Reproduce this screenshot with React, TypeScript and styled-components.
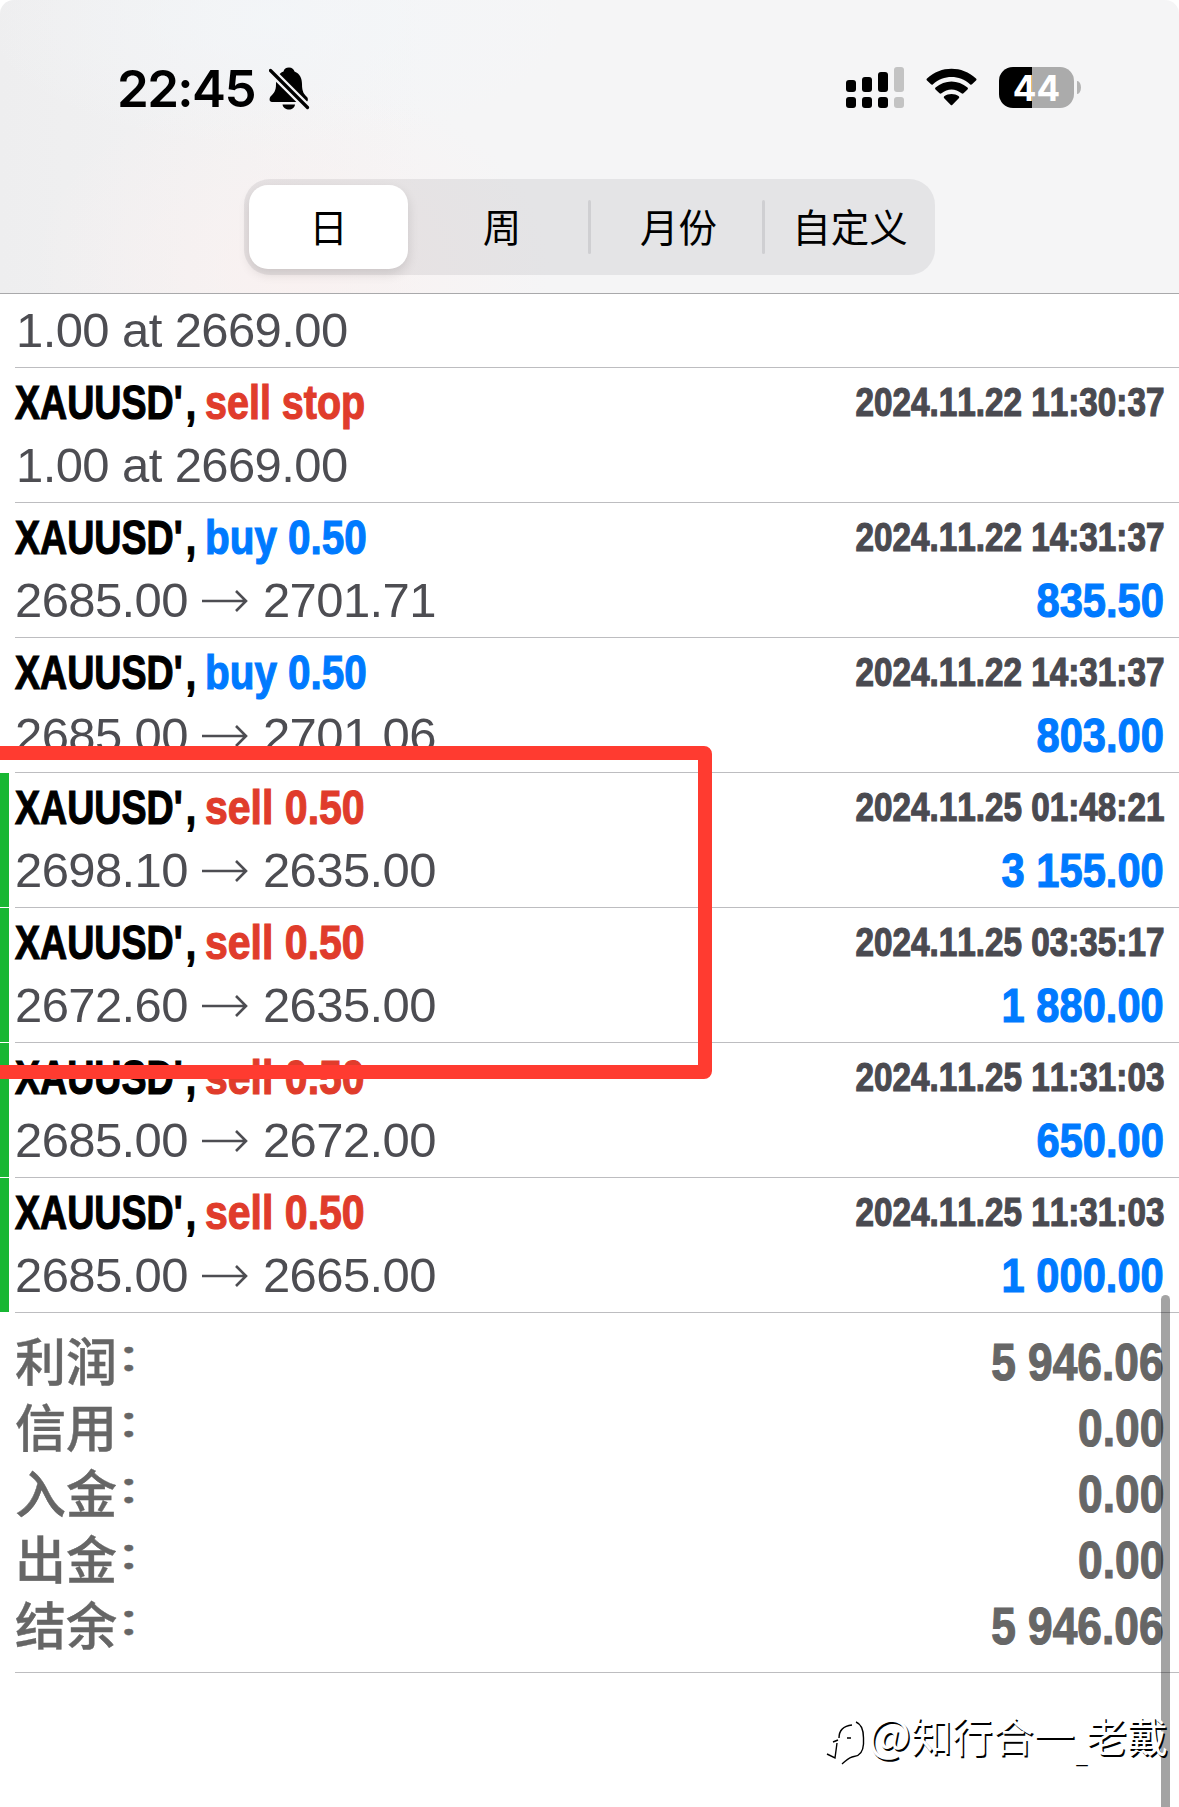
import React from "react";
import styled, { createGlobalStyle } from "styled-components";

const GlobalStyle = createGlobalStyle`
	* {
		box-sizing: border-box;
	}
	body {
		margin: 0;
		background: #fff;
		font-family: "Liberation Sans", "Noto Sans CJK SC", sans-serif;
		font-kerning: none;
	}
`;

const Screen = styled.main`
	position: relative;
	width: 1179px;
	height: 1807px;
	overflow: hidden;
	background: #fff;
`;

const Header = styled.header`
	height: 294px;
	border-bottom: 1px solid #a9a9ab;
	border-radius: 14px 14px 0 0;
	background:
		radial-gradient(ellipse 260px 190px at 290px 270px, rgba(251, 241, 240, 0.8), rgba(251, 241, 240, 0)),
		radial-gradient(ellipse 300px 130px at 280px 20px, rgba(243, 246, 249, 0.8), rgba(243, 246, 249, 0)),
		linear-gradient(90deg, #eeeeef 0, #f0f0f1 130px, #f5f5f6 420px);
`;

const StatusBar = styled.div`
	display: flex;
	justify-content: space-between;
	height: 179px;
	padding: 67px 97px 0 117px;
`;

const StatusGroup = styled.div`
	display: flex;
	height: 42px;
`;

const Clock = styled.time`
	width: 152px;
	font: 600 51px/43px Inter, sans-serif;
	letter-spacing: -1.6px;
	white-space: nowrap;
`;

const Signal = styled.svg`
	width: 58px;
	height: 41px;
	margin-right: 22px;
`;

const Wifi = styled.svg`
	width: 51px;
	height: 41px;
	margin-right: 22px;
`;

const Battery = styled.div`
	width: 75px;
	height: 41px;
	margin-right: 3px;
	border-radius: 14px;
	background: linear-gradient(90deg, #000 33px, #ababab 33px);
	color: #fff;
	font: 700 35px/42px Inter, sans-serif;
	text-align: center;
`;

const BatteryTip = styled.div`
	width: 4px;
	height: 13px;
	margin: 14px 1px 0 0;
	border-radius: 0 4px 4px 0 / 0 7px 7px 0;
	background: #b4b4b4;
`;

const Segments = styled.nav`
	display: flex;
	align-items: center;
	width: 691px;
	height: 96px;
	margin-left: 244px;
	padding: 0 5px;
	border-radius: 26px;
	background: rgba(118, 118, 122, 0.13);
`;

const Segment = styled.div<{ $active?: boolean; $width: number; $shift?: number }>`
	flex: none;
	width: ${({ $width }) => $width}px;
	height: 84px;
	padding-left: ${({ $shift = 0 }) => $shift}px;
	border-radius: 19px;
	background: ${({ $active }) => ($active ? "#fff" : "none")};
	box-shadow: ${({ $active }) => ($active ? "0 5px 12px rgba(0, 0, 0, 0.12)" : "none")};
	font: 400 38.500px/81px "Noto Sans CJK SC", sans-serif;
	text-align: center;
	white-space: nowrap;
`;

const SegmentDivider = styled.div`
	flex: none;
	width: 3px;
	height: 54px;
	border-radius: 2px;
	background: #cfcfd2;
`;

const Row = styled.article<{ $closed?: boolean; $partial?: boolean }>`
	display: flex;
	flex-direction: column;
	justify-content: flex-end;
	height: ${({ $partial }) => ($partial ? 74 : 135)}px;
	padding: 0 15px 6px 15px;
	background:
		linear-gradient(#bdbdc0, #bdbdc0) 15px 100% / 100% 1px no-repeat,
		linear-gradient(#18b733, #18b733) 0 0 / ${({ $closed }) => ($closed ? 9 : 0)}px calc(100% - 1px) no-repeat;
`;

const Line = styled.div`
	display: flex;
	justify-content: space-between;
	height: 63px;
	line-height: 63px;
	white-space: nowrap;
`;

const Condensed = styled.span<{ $squeeze: number; $end?: boolean }>`
	display: block;
	font-weight: 700;
	transform: scaleX(${({ $squeeze }) => $squeeze});
	transform-origin: ${({ $end }) => ($end ? "right" : "left")};
	-webkit-text-stroke: 1.2px currentColor;
`;

const Title = styled.div`
	display: flex;
	font-size: 49px;
`;

const SymbolName = styled.div`
	width: 190px;
	color: #000;
`;

const Apostrophe = styled.span`
	letter-spacing: 4px;
`;

const Side = styled.div<{ $side: string }>`
	color: ${({ $side }) => ($side === "buy" ? "#007aff" : "#e03c2b")};
`;

const Time = styled.div`
	color: #4a4a50;
	font-size: 40px;
`;

const Prices = styled.div<{ $pending?: boolean }>`
	display: flex;
	align-items: center;
	padding-left: ${({ $pending }) => ($pending ? 1 : 0)}px;
	color: #4d4d52;
	font-size: 49px;
	letter-spacing: -0.6px;
`;

const Arrow = styled.svg`
	width: 46px;
	height: 28px;
	margin: 0 15px 0 14px;
`;

const Profit = styled.div`
	color: #007aff;
	font-size: 49px;
`;

const Summary = styled.section`
	height: 360px;
	padding: 17px 15px 0 15px;
	background: linear-gradient(#bdbdc0, #bdbdc0) 15px 100% / 100% 1px no-repeat;
`;

const SummaryRow = styled.div`
	display: flex;
	justify-content: space-between;
	height: 66px;
	color: #666;
	font-size: 51px;
	line-height: 66px;
	white-space: nowrap;
`;

const SummaryLabel = styled.div`
	height: 66px;
	font: 500 51px/58px "Noto Sans CJK SC", sans-serif;
	-webkit-text-stroke: 0.4px currentColor;
`;

const Colon = styled.span`
	display: inline-block;
	transform: translate(-1px, -4px) scaleY(0.72);
`;

const Marker = styled.div`
	position: absolute;
	top: 746px;
	left: -20px;
	width: 732px;
	height: 333px;
	border: 14px solid #ff3b30;
	border-radius: 8px;
`;

const Scrollbar = styled.div`
	position: absolute;
	top: 1295px;
	right: 9px;
	bottom: -10px;
	width: 9px;
	border-radius: 5px;
	background: rgba(0, 0, 0, 0.36);
`;

const Watermark = styled.div`
	position: absolute;
	right: 11px;
	bottom: 41px;
	display: flex;
	color: #fff;
	font: 400 41px/60px "Noto Sans CJK SC", sans-serif;
	text-shadow: 1.500px 1.500px 0 #000;
	white-space: nowrap;
`;

const WatermarkLogo = styled.svg`
	width: 40px;
	height: 48px;
	margin: 14px 3px 0 0;
`;

const AtSign = styled.span`
	font-size: 45px;
	line-height: 45px;
`;

const Underscore = styled.span`
	font-family: "Liberation Sans", sans-serif;
	font-size: 20px;
	line-height: 20px;
	vertical-align: -8px;
`;

interface Deal {
	side: string;
	detail: string;
	time: string;
	from: string;
	to?: string;
	profit?: string;
	closed?: boolean;
}

const deals: Deal[] = [
	{ side: "sell", detail: "stop", time: "2024.11.22 11:30:37", from: "1.00 at 2669.00" },
	{ side: "buy", detail: "0.50", time: "2024.11.22 14:31:37", from: "2685.00", to: "2701.71", profit: "835.50" },
	{ side: "buy", detail: "0.50", time: "2024.11.22 14:31:37", from: "2685.00", to: "2701.06", profit: "803.00" },
	{ side: "sell", detail: "0.50", time: "2024.11.25 01:48:21", from: "2698.10", to: "2635.00", profit: "3 155.00", closed: true },
	{ side: "sell", detail: "0.50", time: "2024.11.25 03:35:17", from: "2672.60", to: "2635.00", profit: "1 880.00", closed: true },
	{ side: "sell", detail: "0.50", time: "2024.11.25 11:31:03", from: "2685.00", to: "2672.00", profit: "650.00", closed: true },
	{ side: "sell", detail: "0.50", time: "2024.11.25 11:31:03", from: "2685.00", to: "2665.00", profit: "1 000.00", closed: true },
];

const totals = [
	["利润", "5 946.06"],
	["信用", "0.00"],
	["入金", "0.00"],
	["出金", "0.00"],
	["结余", "5 946.06"],
];

const sideSqueeze = ({ side, detail }: Deal) => {
	if (detail === "stop") return 0.806;
	return side === "buy" ? 0.825 : 0.837;
};

const BellOff = () => (
	<svg width="42" height="43" viewBox="0 0 42 43">
		<path d="M20 0.500C23 .5 25 2.500 25.500 4.500C31 6.500 33 11.500 33 17C33 25 35 27 38 30C39 31 39.500 34 37.500 35H3C0 35 0 31 2 29C5 26 7 24 7 17C7 11 9.500 6.500 14.500 4.500C15 2 17 .5 20 .5Z" />
		<path d="M13.500 37.500H26C25.500 41 23 42.500 20 42.500C17 42.500 14 41 13.500 37.500Z" />
		<path d="M1.500 3.500L38.500 40.500" stroke="#f4f4f6" strokeWidth="8" />
		<path d="M1.500 3.500L38.500 40.500" stroke="#000" strokeWidth="3.200" strokeLinecap="round" />
	</svg>
);

const DealRow = ({ deal }: { deal: Deal }) => (
	<Row $closed={deal.closed}>
		<Line>
			<Title>
				<SymbolName>
					<Condensed $squeeze={0.767}>
						XAUUSD<Apostrophe>'</Apostrophe>,
					</Condensed>
				</SymbolName>
				<Side $side={deal.side}>
					<Condensed $squeeze={sideSqueeze(deal)}>
						{deal.side} {deal.detail}
					</Condensed>
				</Side>
			</Title>
			<Time>
				<Condensed $squeeze={0.832} $end>
					{deal.time}
				</Condensed>
			</Time>
		</Line>
		<Line>
			<Prices $pending={!deal.to}>
				{deal.from}
				{deal.to && (
					<>
						<Arrow viewBox="0 0 46 28" fill="none" stroke="currentColor" strokeWidth="2.600">
							<path d="M0 14H44M34 4L44 14L34 24" />
						</Arrow>
						{deal.to}
					</>
				)}
			</Prices>
			{deal.profit && (
				<Profit>
					<Condensed $squeeze={0.85} $end>
						{deal.profit}
					</Condensed>
				</Profit>
			)}
		</Line>
	</Row>
);

const App: React.FC = () => (
	<>
		<GlobalStyle />
		<Screen>
			<Header>
				<StatusBar>
					<StatusGroup>
						<Clock>22:45</Clock>
						<BellOff />
					</StatusGroup>
					<StatusGroup>
						<Signal viewBox="0 0 58 41">
							<rect x="0" y="13" width="10" height="12" rx="3" />
							<rect x="16" y="10" width="10" height="15" rx="3" />
							<rect x="32" y="5" width="10" height="20" rx="3" />
							<rect x="48" y="0" width="10" height="25" rx="3" fill="#c3c3c3" />
							<rect x="0" y="30" width="10" height="11" rx="3" />
							<rect x="16" y="30" width="10" height="11" rx="3" />
							<rect x="32" y="30" width="10" height="11" rx="3" />
							<rect x="48" y="30" width="10" height="11" rx="3" fill="#c3c3c3" />
						</Signal>
						<Wifi viewBox="0 0 51 41">
							<path d="M1 11.500Q0 12.500 1 13.500L5 17.300Q6 18.200 7 17.200C17.500 7.500 33.500 7.500 44 17.200Q45 18.200 46 17.300L50 13.500Q51 12.500 50 11.500C36 -1.500 15 -1.500 1 11.500Z" />
							<path d="M9.500 20.500Q8.500 21.500 9.500 22.500L13.500 26.300Q14.500 27.200 15.500 26.300C21.500 21.200 29.500 21.200 35.500 26.300Q36.500 27.200 37.500 26.300L41.500 22.500Q42.500 21.500 41.500 20.500C32 12.500 19 12.500 9.500 20.500Z" />
							<path d="M18.200 29.300Q17.200 30.300 18.200 31.300L24.800 38Q25.500 38.700 26.200 38L32.800 31.300Q33.800 30.300 32.800 29.300C28.500 26.200 22.500 26.200 18.200 29.300Z" />
						</Wifi>
						<Battery>44</Battery>
						<BatteryTip />
					</StatusGroup>
				</StatusBar>
				<Segments>
					<Segment $active $width={159}>日</Segment>
					<Segment $width={180} $shift={8}>周</Segment>
					<SegmentDivider />
					<Segment $width={171} $shift={4}>月份</Segment>
					<SegmentDivider />
					<Segment $width={170}>自定义</Segment>
				</Segments>
			</Header>
			<Row $partial>
				<Line>
					<Prices $pending>1.00 at 2669.00</Prices>
				</Line>
			</Row>
			{deals.map((deal, index) => (
				<DealRow key={index} deal={deal} />
			))}
			<Summary>
				{totals.map(([label, value]) => (
					<SummaryRow key={label}>
						<SummaryLabel>
							{label}
							<Colon>：</Colon>
						</SummaryLabel>
						<Condensed $squeeze={0.868} $end>
							{value}
						</Condensed>
					</SummaryRow>
				))}
			</Summary>
			<Marker />
			<Scrollbar />
			<Watermark>
				<WatermarkLogo viewBox="0 0 40 48" fill="none" stroke="#000" strokeWidth="1.400">
					<path d="M31 4C36 6 38.500 12 38.500 20V26C38 34 34 38 29 38.500C24 39 22 42 17 46" />
					<path d="M14 20C14 12 18 8 27 7M8 24L13 22M12 25L10 40L2 36M22 20H26" />
				</WatermarkLogo>
				<div>
					<AtSign>@</AtSign>知行合一<Underscore>_</Underscore>老戴
				</div>
			</Watermark>
		</Screen>
	</>
);

export default App;
